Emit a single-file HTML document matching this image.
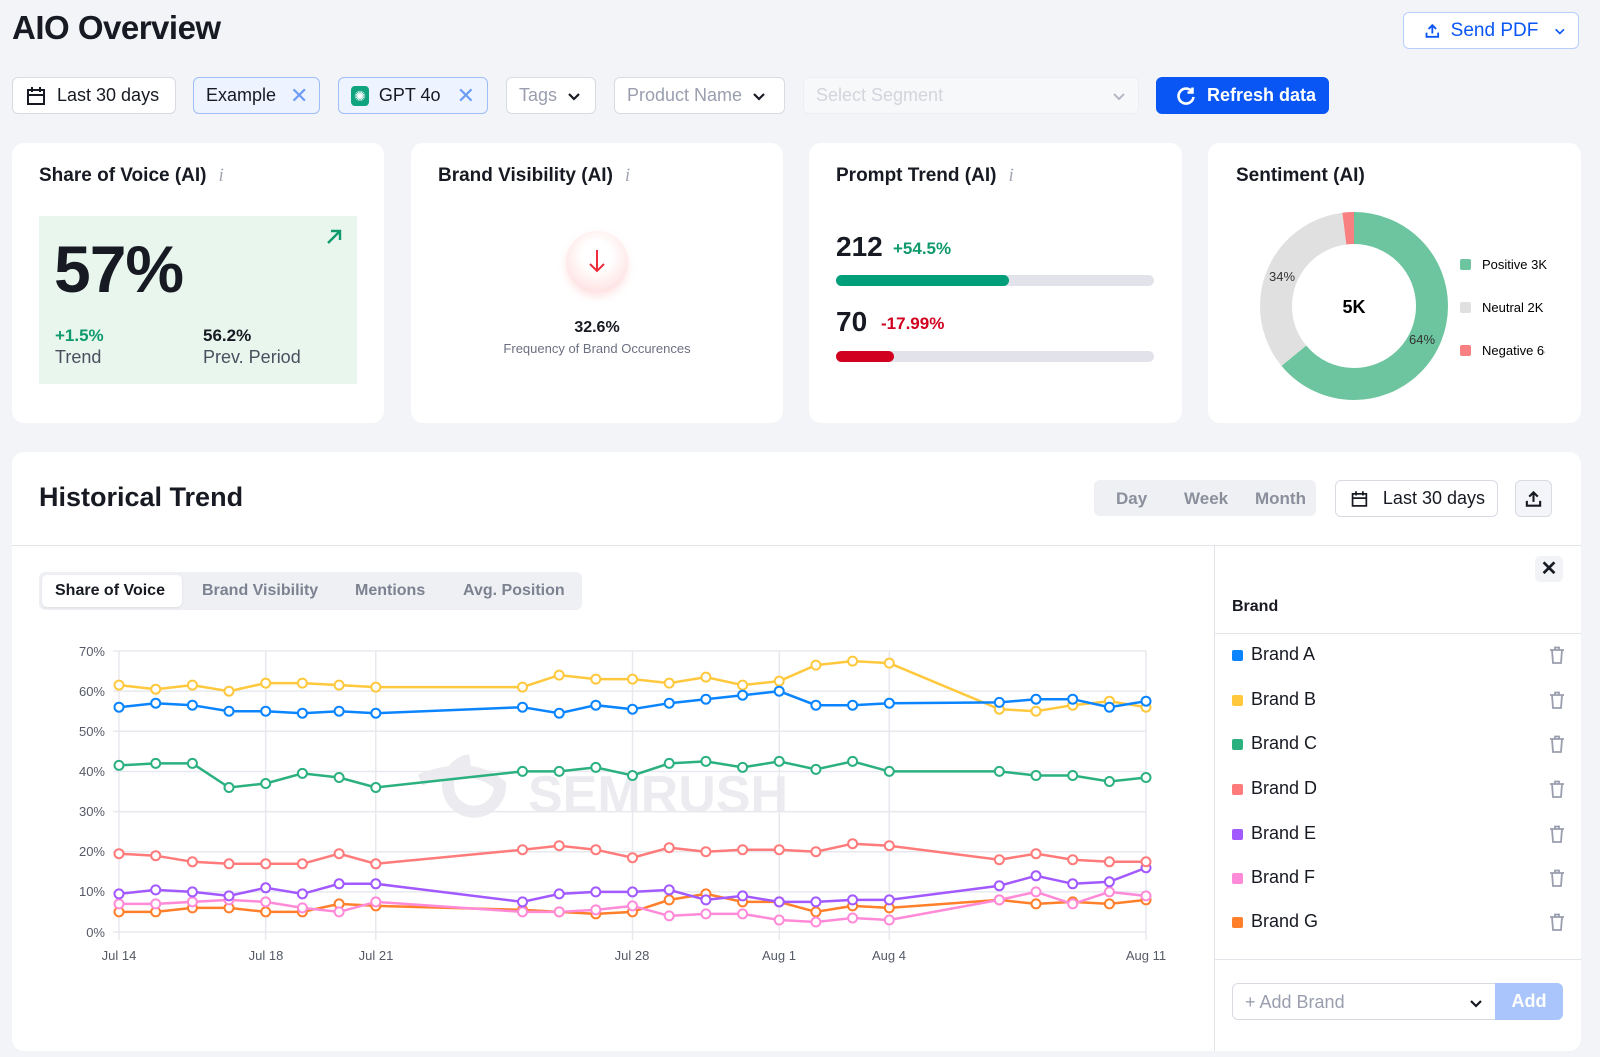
<!DOCTYPE html>
<html><head><meta charset="utf-8">
<style>
*{box-sizing:border-box;margin:0;padding:0}
body{width:1600px;height:1057px;background:#f3f4f8;font-family:"Liberation Sans",sans-serif;color:#171a22;position:relative;overflow:hidden}
.a{position:absolute;white-space:nowrap}
.btn{position:absolute;height:37px;border:1px solid #d9dbe3;border-radius:6px;background:#fff;font-size:18px;display:flex;align-items:center;padding:0 12px;gap:10px;white-space:nowrap}
.chip{background:#edf3ff;border-color:#9fbef9}
.card{position:absolute;background:#fff;border-radius:12px}
.ct{position:absolute;left:27px;top:22px;font-size:19px;font-weight:bold;white-space:nowrap}
.ct i{color:#a4a8b6;font-family:"Liberation Serif",serif;font-weight:normal;margin-left:12px}
.x{color:#6c9cf5;font-size:22px}
</style></head><body>
<div class="a" style="left:12px;top:9px;font-size:33px;font-weight:bold;letter-spacing:-0.5px">AIO Overview</div>
<div class="btn" style="left:1403px;top:12px;width:176px;border-color:#b9cffb;color:#0a56f5;font-size:19px;padding-left:20px">
<svg width="20" height="20" viewBox="0 0 20 20" fill="none" stroke="#0a56f5" stroke-width="2.2"><path d="M10 13V3M5.5 7.5L10 3l4.5 4.5M3 12v5h14v-5"/></svg>Send PDF <svg width="14" height="14" viewBox="0 0 14 14" style="margin-left:6px"><path d="M2 5l5 5 5-5" stroke="#0a56f5" stroke-width="2" fill="none"/></svg></div>

<div class="btn" style="left:12px;top:77px;width:164px"><svg width="22" height="22" viewBox="0 0 22 22" fill="none" stroke="#171a22" stroke-width="2"><rect x="3" y="5" width="16" height="14"/><path d="M3 10h16M7 2v5M15 2v5"/></svg>Last 30 days</div>
<div class="btn chip" style="left:193px;top:77px;width:127px">Example <span class="x" style="margin-left:4px">✕</span></div>
<div class="btn chip" style="left:338px;top:77px;width:150px"><span style="width:20px;height:20px;background:#10a37f;border-radius:4px;display:inline-block;color:#fff;font-size:14px;text-align:center;line-height:20px">✺</span>GPT 4o <span class="x" style="margin-left:6px">✕</span></div>
<div class="btn" style="left:506px;top:77px;width:90px;color:#9a9eae">Tags <svg width="14" height="14" viewBox="0 0 14 14"><path d="M2 5l5 5 5-5" stroke="#171a22" stroke-width="2.2" fill="none"/></svg></div>
<div class="btn" style="left:614px;top:77px;width:171px;color:#9a9eae">Product Name <svg width="14" height="14" viewBox="0 0 14 14"><path d="M2 5l5 5 5-5" stroke="#171a22" stroke-width="2.2" fill="none"/></svg></div>
<div class="btn" style="left:803px;top:77px;width:336px;color:#d3d5dd;background:#f7f8fa;border-color:#eceef2;justify-content:space-between">Select Segment <svg width="14" height="14" viewBox="0 0 14 14"><path d="M2 5l5 5 5-5" stroke="#b5b8c3" stroke-width="2" fill="none"/></svg></div>
<div class="btn" style="left:1156px;top:77px;width:173px;background:#0a56f5;border-color:#0a56f5;color:#fff;font-weight:bold;padding-left:18px"><svg width="22" height="22" viewBox="0 0 22 22" fill="none" stroke="#fff" stroke-width="2.6"><path d="M17 6.5A7.5 7.5 0 1 0 18.5 12"/><path d="M17.5 2.5v5h-5"/></svg>Refresh data</div>

<div class="card" style="left:12px;top:143px;width:372px;height:280px">
<div class="ct">Share of Voice (AI)<i>i</i></div>
<div class="a" style="left:27px;top:73px;width:318px;height:168px;background:#e9f6ee"></div>
<div class="a" style="left:42px;top:88px;font-size:66px;font-weight:bold;letter-spacing:-1px">57%</div>
<svg class="a" style="left:313px;top:85px" width="18" height="18" viewBox="0 0 18 18" fill="none" stroke="#0f9a6e" stroke-width="2.4"><path d="M3 15L15 3M6 3h9v9"/></svg>
<div class="a" style="left:43px;top:183px;font-size:17px;font-weight:bold;color:#0f9a6e">+1.5%</div>
<div class="a" style="left:43px;top:204px;font-size:18px;color:#4a4f5e">Trend</div>
<div class="a" style="left:191px;top:183px;font-size:17px;font-weight:bold">56.2%</div>
<div class="a" style="left:191px;top:204px;font-size:18px;color:#4a4f5e">Prev. Period</div>
</div>
<div class="card" style="left:411px;top:143px;width:372px;height:280px">
<div class="ct">Brand Visibility (AI)<i>i</i></div>
<div class="a" style="left:155px;top:88px;width:62px;height:62px;border-radius:50%;background:radial-gradient(circle at 50% 40%,#fff 30%,#ffe3e3 75%,#fde9e9);box-shadow:0 4px 8px rgba(255,150,150,.25)"></div>
<svg class="a" style="left:176px;top:105px" width="20" height="26" viewBox="0 0 20 26" fill="none" stroke="#ef2b3b" stroke-width="2"><path d="M10 2v21M3 16l7 7 7-7"/></svg>
<div class="a" style="left:0;width:372px;text-align:center;top:176px;font-size:16px;font-weight:bold">32.6%</div>
<div class="a" style="left:0;width:372px;text-align:center;top:198px;font-size:13px;color:#6c7080">Frequency of Brand Occurences</div>
</div>
<div class="card" style="left:809px;top:143px;width:373px;height:280px">
<div class="ct">Prompt Trend (AI)<i>i</i></div>
<div class="a" style="left:27px;top:88px;font-size:28px;font-weight:bold">212</div>
<div class="a" style="left:84px;top:96px;font-size:17px;font-weight:bold;color:#0f9a6e">+54.5%</div>
<div class="a" style="left:27px;top:132px;width:318px;height:11px;border-radius:6px;background:#e2e3ea"><div style="width:173px;height:11px;border-radius:6px;background:#009f7a"></div></div>
<div class="a" style="left:27px;top:163px;font-size:28px;font-weight:bold">70</div>
<div class="a" style="left:72px;top:171px;font-size:17px;font-weight:bold;color:#d1001f">-17.99%</div>
<div class="a" style="left:27px;top:208px;width:318px;height:11px;border-radius:6px;background:#e2e3ea"><div style="width:58px;height:11px;border-radius:6px;background:#d1001f"></div></div>
</div>
<div class="card" style="left:1208px;top:143px;width:373px;height:280px;overflow:hidden">
<div class="ct" style="left:28px">Sentiment (AI)</div>
<svg class="a" style="left:0;top:0" width="373" height="280">
<g transform="translate(146,163) rotate(-90)" fill="none" stroke-width="32">
<circle r="78" stroke="#6cc59e" stroke-dasharray="313.6 490.1"/>
<circle r="78" stroke="#e0e0e0" stroke-dasharray="0 313.6 166.6 490" />
<circle r="78" stroke="#f88080" stroke-dasharray="0 480.2 9.9 490"/>
</g>
<text x="146" y="170" text-anchor="middle" font-size="18" font-weight="bold" font-family="Liberation Sans">5K</text>
<text x="61" y="138" font-size="13" fill="#333" font-family="Liberation Sans">34%</text>
<text x="201" y="201" font-size="13" fill="#333" font-family="Liberation Sans">64%</text>
<rect x="252" y="116" width="11" height="11" rx="2" fill="#6cc59e"/><text x="274" y="126" font-size="13" font-family="Liberation Sans">Positive 3K</text>
<rect x="252" y="159" width="11" height="11" rx="2" fill="#e0e0e0"/><text x="274" y="169" font-size="13" font-family="Liberation Sans">Neutral 2K</text>
<rect x="252" y="202" width="11" height="11" rx="2" fill="#f88080"/><text x="274" y="212" font-size="13" font-family="Liberation Sans">Negative 68</text>
<rect x="337" y="195" width="40" height="25" fill="#fff"/>
</svg>
</div>

<div class="card" style="left:12px;top:452px;width:1569px;height:599px"></div>
<div class="a" style="left:39px;top:482px;font-size:27px;font-weight:bold">Historical Trend</div>
<div class="a" style="left:1094px;top:480px;width:222px;height:36px;background:#eef0f4;border-radius:6px;font-size:17px;font-weight:bold;color:#8b8f9c">
<span class="a" style="left:22px;top:9px">Day</span><span class="a" style="left:90px;top:9px">Week</span><span class="a" style="left:161px;top:9px">Month</span></div>
<div class="btn" style="left:1335px;top:480px;width:163px;height:37px;padding-left:14px;gap:14px"><svg width="20" height="20" viewBox="0 0 22 22" fill="none" stroke="#171a22" stroke-width="2"><rect x="3" y="5" width="16" height="14"/><path d="M3 10h16M7 2v5M15 2v5"/></svg>Last 30 days</div>
<div class="btn" style="left:1515px;top:480px;width:37px;padding:0 8px;background:#f4f5f8"><svg width="20" height="20" viewBox="0 0 20 20" fill="none" stroke="#171a22" stroke-width="2.2"><path d="M10 13V3M5.5 7.5L10 3l4.5 4.5M3 12v5h14v-5"/></svg></div>
<div class="a" style="left:12px;top:545px;width:1569px;height:1px;background:#e2e4ea"></div>
<div class="a" style="left:1214px;top:545px;width:1px;height:506px;background:#e2e4ea"></div>

<div class="a" style="left:39px;top:572px;width:543px;height:38px;background:#eef0f4;border-radius:6px;font-size:16px;font-weight:bold;color:#7d8291">
<div class="a" style="left:3px;top:3px;width:140px;height:32px;background:#fff;border-radius:5px;box-shadow:0 1px 2px rgba(0,0,0,.08)"></div>
<span class="a" style="left:16px;top:10px;color:#171a22">Share of Voice</span>
<span class="a" style="left:163px;top:10px">Brand Visibility</span>
<span class="a" style="left:316px;top:10px">Mentions</span>
<span class="a" style="left:424px;top:10px">Avg. Position</span>
</div>

<svg class="a" style="left:0;top:0" width="1214" height="1057" id="ch" font-family="Liberation Sans">
<text x="528" y="812" font-size="52" font-weight="bold" fill="#ececf0">SEMRUSH</text>
<path d="M420 780 Q470 760 500 785 A26 26 0 1 1 470 760" fill="none" stroke="#ececf0" stroke-width="12"/>
<g font-size="13" fill="#555a66" text-anchor="end">
<text x="105" y="656">70%</text><text x="105" y="696">60%</text><text x="105" y="736">50%</text><text x="105" y="776">40%</text><text x="105" y="816">30%</text><text x="105" y="856">20%</text><text x="105" y="896">10%</text><text x="105" y="937">0%</text>
</g>
<g font-size="13" fill="#555a66" text-anchor="middle">
<text x="119" y="960">Jul 14</text><text x="266" y="960">Jul 18</text><text x="376" y="960">Jul 21</text><text x="632" y="960">Jul 28</text><text x="779" y="960">Aug 1</text><text x="889" y="960">Aug 4</text><text x="1146" y="960">Aug 11</text>
</g>
<g id="grid" stroke="#e8e9ef" stroke-width="1.5"></g>
<g id="lines"></g>
</svg>

<div class="a" style="left:1535px;top:556px;width:28px;height:26px;background:#f2f3f6;border-radius:5px;text-align:center;font-size:20px;font-weight:bold;line-height:26px">✕</div>
<div class="a" style="left:1232px;top:598px;font-size:16px;font-weight:bold">Brand</div>
<div class="a" style="left:1215px;top:633px;width:366px;height:1px;background:#e2e4ea"></div>
<div class="a" style="left:1215px;top:959px;width:366px;height:1px;background:#e2e4ea"></div>
<div id="brands"></div>
<div class="a" style="left:1232px;top:983px;width:330px;height:37px;border:1px solid #d9dbe3;border-radius:6px;font-size:18px;color:#9a9eae;padding:8px 12px">+ Add Brand
<svg class="a" style="left:236px;top:12px" width="14" height="14" viewBox="0 0 14 14"><path d="M2 5l5 5 5-5" stroke="#171a22" stroke-width="2.2" fill="none"/></svg>
<div class="a" style="left:262px;top:-1px;width:68px;height:37px;background:#a9c5fb;border-radius:0 6px 6px 0;color:#fff;font-weight:bold;text-align:center;line-height:37px">Add</div></div>

<script>
var cols=["#0a84ff","#ffc83d","#2bb07f","#ff7b7b","#a259ff","#ff8ad8","#ff7f2a"];
var names=["A","B","C","D","E","F","G"];
var days=[0,1,2,3,4,5,6,7,11,12,13,14,15,16,17,18,19,20,21,24,25,26,27,28];
var D=[
[56,57,56.5,55,55,54.5,55,54.5,56,54.5,56.5,55.5,57,58,59,60,56.5,56.5,57,57.2,58,58,56,57.5],
[61.5,60.5,61.5,60,62,62,61.5,61,61,64,63,63,62,63.5,61.5,62.5,66.5,67.5,67,55.5,55,56.5,57.5,56],
[41.5,42,42,36,37,39.5,38.5,36,40,40,41,39,42,42.5,41,42.5,40.5,42.5,40,40,39,39,37.5,38.5],
[19.5,19,17.5,17,17,17,19.5,17,20.5,21.5,20.5,18.5,21,20,20.5,20.5,20,22,21.5,18,19.5,18,17.5,17.5],
[9.5,10.5,10,9,11,9.5,12,12,7.5,9.5,10,10,10.5,8,9,7.5,7.5,8,8,11.5,14,12,12.5,16],
[7,7,7.5,8,7.5,6,5,7.5,5,5,5.5,6.5,4,4.5,4.5,3,2.5,3.5,3,8,10,7,10,9],
[5,5,6,6,5,5,7,6.5,5.5,5,4.5,5,8,9.5,7.5,7.5,5,6.5,6,8,7,7.5,7,8]];
function X(d){return 119+d*36.68}function Y(v){return 932-v*4.014}
var g='';for(var i=0;i<=7;i++)g+='<line x1="113" x2="1146" y1="'+Y(i*10)+'" y2="'+Y(i*10)+'"/>';
[0,4,7,14,18,21,28].forEach(function(d){g+='<line x1="'+X(d)+'" x2="'+X(d)+'" y1="651" y2="940"/>'});
document.getElementById('grid').innerHTML=g;
var s='';
for(var b=6;b>=0;b--){var p=D[b].map(function(v,i){return X(days[i]).toFixed(1)+','+Y(v).toFixed(1)}).join(' ');
s+='<polyline points="'+p+'" fill="none" stroke="'+cols[b]+'" stroke-width="2.5"/>';
D[b].forEach(function(v,i){s+='<circle cx="'+X(days[i]).toFixed(1)+'" cy="'+Y(v).toFixed(1)+'" r="4.5" fill="#fff" stroke="'+cols[b]+'" stroke-width="2"/>'});}
document.getElementById('lines').innerHTML=s;
var h='';var ys=[655,700,744,789,834,878,922];
for(var k=0;k<7;k++){h+='<div class="a" style="left:1232px;top:'+(ys[k]-5)+'px;width:11px;height:11px;border-radius:2px;background:'+cols[k]+'"></div><div class="a" style="left:1251px;top:'+(ys[k]-11)+'px;font-size:18px">Brand '+names[k]+'</div><svg class="a" style="left:1547px;top:'+(ys[k]-10)+'px" width="20" height="20" viewBox="0 0 20 20" fill="none" stroke="#9a9eae" stroke-width="1.8"><path d="M3 5h14M8 5V2.5h4V5M5 5l1 13h8l1-13"/></svg>';}
document.getElementById('brands').innerHTML=h;
</script>
</body></html>
